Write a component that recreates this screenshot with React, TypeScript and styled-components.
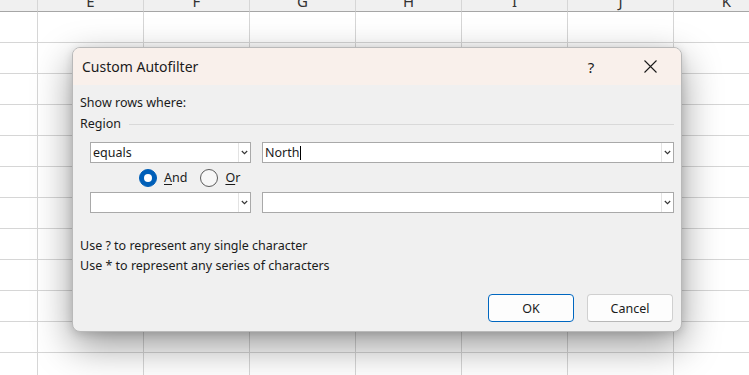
import styled, { createGlobalStyle } from 'styled-components';

const GlobalStyle = createGlobalStyle`
    html, body {
        margin: 0;
        padding: 0;
        background: #ffffff;
        font-family: "Noto Sans", "Open Sans", sans-serif;
        color: #1b1b1b;
    }
    #root {
        width: 749px;
        height: 375px;
        overflow: hidden;
        position: relative;
    }
`;

const Sheet = styled.div`
    display: grid;
    grid-template-columns: 38px repeat(7, 106px);
    width: 749px;
`;

const HeadCell = styled.div`
    height: 11px;
    background: #f0f0f0;
    border-right: 1px solid #d6d6d6;
    border-bottom: 1px solid #a6a6a6;
    overflow: hidden;
    display: flex;
    justify-content: center;
    align-items: flex-end;
    font-size: 15px;
    line-height: 15px;
    color: #333;
    span {
        margin-bottom: 2px;
    }
`;

const Cell = styled.div`
    height: 30px;
    border-right: 1px solid #d6d6d6;
    border-bottom: 1px solid #d6d6d6;
`;

const Dialog = styled.div`
    position: absolute;
    left: 72px;
    top: 47px;
    width: 608px;
    height: 283px;
    border: 1px solid #b9b9b9;
    border-radius: 8px;
    background: #f0f0f0;
    box-shadow: 0 14px 38px rgba(0, 0, 0, 0.4), 0 2px 10px rgba(0, 0, 0, 0.14);
    display: flex;
    flex-direction: column;
    overflow: hidden;
`;

const TitleBar = styled.div`
    height: 37px;
    flex: none;
    background: #f9f0eb;
    display: flex;
    align-items: center;
    padding-left: 9px;
    padding-right: 1px;
`;

const Title = styled.div`
    flex: 1;
    font-size: 14px;
`;

const TitleButton = styled.div<{ $width: number }>`
    width: ${p => p.$width}px;
    height: 37px;
    display: flex;
    justify-content: center;
    align-items: center;
    font-size: 15px;
`;

const Body = styled.div`
    flex: 1;
    display: flex;
    flex-direction: column;
    padding: 10px 7px 0 7px;
    font-size: 12.5px;
`;

const Line = styled.div`
    height: 16px;
    line-height: 16px;
    white-space: nowrap;
`;

const Legend = styled.div`
    margin-top: 5px;
    display: flex;
    align-items: center;
    gap: 8px;
    height: 16px;
    line-height: 16px;
    &::after {
        content: '';
        flex: 1;
        height: 1px;
        background: #d9d9d9;
    }
`;

const CriteriaRow = styled.div<{ $top: number }>`
    margin: ${p => p.$top}px 0 0 10px;
    display: flex;
    gap: 11px;
`;

const Combo = styled.div<{ $width: number }>`
    width: ${p => p.$width}px;
    height: 21px;
    box-sizing: border-box;
    border: 1px solid #a9a9a9;
    background: #ffffff;
    display: flex;
    align-items: stretch;
`;

const ComboText = styled.div`
    flex: 1;
    display: flex;
    align-items: center;
    padding-left: 2px;
    white-space: nowrap;
`;

const Caret = styled.span`
    display: inline-block;
    width: 1px;
    height: 14px;
    background: #000;
    margin-left: 1px;
`;

const DropArrow = styled.div`
    width: 11px;
    border-left: 1px solid #e3e3e3;
    display: flex;
    justify-content: center;
    align-items: center;
`;

const RadioRow = styled.div`
    height: 29px;
    margin-left: 59px;
    display: flex;
    align-items: center;
`;

const RadioLabel = styled.label`
    display: flex;
    align-items: center;
    gap: 7px;
    margin-right: 13px;
    u {
        text-decoration-thickness: 1px;
        text-underline-offset: 2px;
    }
`;

const RadioDot = styled.span<{ $on?: boolean }>`
    width: 18px;
    height: 18px;
    box-sizing: border-box;
    border-radius: 50%;
    display: flex;
    justify-content: center;
    align-items: center;
    background: ${p => (p.$on ? '#005fb8' : '#f7f7f7')};
    border: 1px solid ${p => (p.$on ? '#005fb8' : '#5c5c5c')};
    &::after {
        content: '';
        display: ${p => (p.$on ? 'block' : 'none')};
        width: 8px;
        height: 8px;
        border-radius: 50%;
        background: #ffffff;
    }
`;

const Hints = styled.div`
    margin-top: 23px;
    line-height: 20px;
`;

const Footer = styled.div`
    margin-top: 18px;
    display: flex;
    justify-content: flex-end;
    gap: 13px;
    padding-right: 1px;
`;

const Button = styled.button<{ $primary?: boolean }>`
    width: 86px;
    height: 28px;
    border-radius: 4px;
    font-family: inherit;
    font-size: 12.5px;
    color: #1b1b1b;
    background: #fdfdfd;
    border: 1px solid ${p => (p.$primary ? '#0067c0' : '#d0d0d0')};
    border-bottom-color: ${p => (p.$primary ? '#0067c0' : '#b8b8b8')};
`;

function Chevron() {
    return (
        <svg width="7" height="5" viewBox="0 0 7 5">
            <path d="M0.8 1 L3.5 3.7 L6.2 1" fill="none" stroke="#333" strokeWidth="1.1" />
        </svg>
    );
}

const columns = ['', 'E', 'F', 'G', 'H', 'I', 'J', 'K'];

function App() {
    return (
        <>
            <GlobalStyle />
            <Sheet>
                {columns.map((c, i) => (
                    <HeadCell key={'h' + i}><span>{c}</span></HeadCell>
                ))}
                {Array.from({ length: 12 * columns.length }).map((_, i) => (
                    <Cell key={i} />
                ))}
            </Sheet>
            <Dialog>
                <TitleBar>
                    <Title>Custom Autofilter</Title>
                    <TitleButton $width={58}>?</TitleButton>
                    <TitleButton $width={60}>
                        <svg width="13" height="13" viewBox="0 0 13 13">
                            <path d="M0.5 0.5 L12.5 12.5 M12.5 0.5 L0.5 12.5" stroke="#1b1b1b" strokeWidth="1.1" />
                        </svg>
                    </TitleButton>
                </TitleBar>
                <Body>
                    <Line>Show rows where:</Line>
                    <Legend>Region</Legend>
                    <CriteriaRow $top={10}>
                        <Combo $width={161}>
                            <ComboText>equals</ComboText>
                            <DropArrow><Chevron /></DropArrow>
                        </Combo>
                        <Combo $width={412}>
                            <ComboText>North<Caret /></ComboText>
                            <DropArrow><Chevron /></DropArrow>
                        </Combo>
                    </CriteriaRow>
                    <RadioRow>
                        <RadioLabel><RadioDot $on /><span><u>A</u>nd</span></RadioLabel>
                        <RadioLabel><RadioDot /><span><u>O</u>r</span></RadioLabel>
                    </RadioRow>
                    <CriteriaRow $top={0}>
                        <Combo $width={161}>
                            <ComboText />
                            <DropArrow><Chevron /></DropArrow>
                        </Combo>
                        <Combo $width={412}>
                            <ComboText />
                            <DropArrow><Chevron /></DropArrow>
                        </Combo>
                    </CriteriaRow>
                    <Hints>
                        <div>Use ? to represent any single character</div>
                        <div>Use * to represent any series of characters</div>
                    </Hints>
                    <Footer>
                        <Button $primary>OK</Button>
                        <Button>Cancel</Button>
                    </Footer>
                </Body>
            </Dialog>
        </>
    );
}

export default App;
